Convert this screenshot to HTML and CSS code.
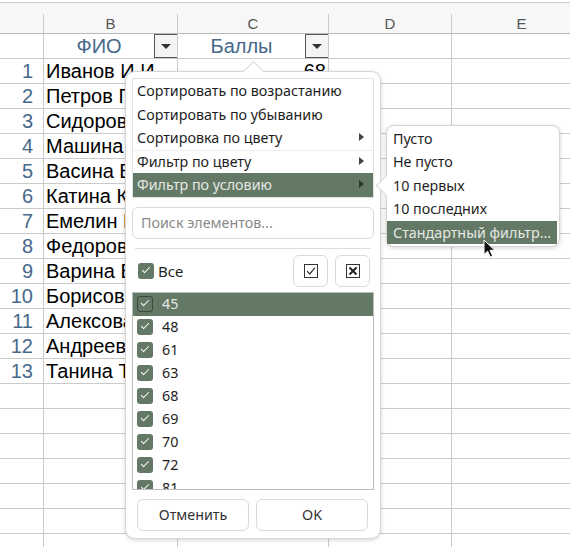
FILE: index.html
```html
<!DOCTYPE html>
<html lang="ru">
  <head>
    <meta charset="UTF-8" />
    <title>Автофильтр</title>
    <link rel="stylesheet" href="styles.css">
  </head>
  <body>
    <div class="screen">
      <div class="sheet">
        <div class="strip"></div>
        <div class="row colhead">
          <div class="c"></div><div class="c">B</div><div class="c">C</div><div class="c">D</div><div class="c">E</div>
        </div>
        <div class="row head">
          <div class="c"></div>
          <div class="c hcell"><span class="title">ФИО</span><span class="dd"></span></div>
          <div class="c hcell"><span class="title">Баллы</span><span class="dd"></span></div>
          <div class="c"></div><div class="c"></div>
        </div>
        <div class="row"><div class="c num">1</div><div class="c name">Иванов И.И.</div><div class="c val">68</div><div class="c"></div><div class="c"></div></div>
        <div class="row"><div class="c num">2</div><div class="c name">Петров П.П.</div><div class="c val"></div><div class="c"></div><div class="c"></div></div>
        <div class="row"><div class="c num">3</div><div class="c name">Сидоров С.С.</div><div class="c val"></div><div class="c"></div><div class="c"></div></div>
        <div class="row"><div class="c num">4</div><div class="c name">Машина М.М.</div><div class="c val"></div><div class="c"></div><div class="c"></div></div>
        <div class="row"><div class="c num">5</div><div class="c name">Васина В.В.</div><div class="c val"></div><div class="c"></div><div class="c"></div></div>
        <div class="row"><div class="c num">6</div><div class="c name">Катина К.К.</div><div class="c val"></div><div class="c"></div><div class="c"></div></div>
        <div class="row"><div class="c num">7</div><div class="c name">Емелин Е.Е.</div><div class="c val"></div><div class="c"></div><div class="c"></div></div>
        <div class="row"><div class="c num">8</div><div class="c name">Федоров Ф.Ф.</div><div class="c val"></div><div class="c"></div><div class="c"></div></div>
        <div class="row"><div class="c num">9</div><div class="c name">Варина В.В.</div><div class="c val"></div><div class="c"></div><div class="c"></div></div>
        <div class="row"><div class="c num">10</div><div class="c name">Борисов Б.Б.</div><div class="c val"></div><div class="c"></div><div class="c"></div></div>
        <div class="row"><div class="c num">11</div><div class="c name">Алексова А.А.</div><div class="c val"></div><div class="c"></div><div class="c"></div></div>
        <div class="row"><div class="c num">12</div><div class="c name">Андреев А.А.</div><div class="c val"></div><div class="c"></div><div class="c"></div></div>
        <div class="row"><div class="c num">13</div><div class="c name">Танина Т.Т.</div><div class="c val"></div><div class="c"></div><div class="c"></div></div>
        <div class="row"><div class="c"></div><div class="c"></div><div class="c"></div><div class="c"></div><div class="c"></div></div>
        <div class="row"><div class="c"></div><div class="c"></div><div class="c"></div><div class="c"></div><div class="c"></div></div>
        <div class="row"><div class="c"></div><div class="c"></div><div class="c"></div><div class="c"></div><div class="c"></div></div>
        <div class="row"><div class="c"></div><div class="c"></div><div class="c"></div><div class="c"></div><div class="c"></div></div>
        <div class="row"><div class="c"></div><div class="c"></div><div class="c"></div><div class="c"></div><div class="c"></div></div>
        <div class="row"><div class="c"></div><div class="c"></div><div class="c"></div><div class="c"></div><div class="c"></div></div>
        <div class="row"><div class="c"></div><div class="c"></div><div class="c"></div><div class="c"></div><div class="c"></div></div>
      </div>

      <!-- autofilter popup -->
      <div class="popup">
        <span class="notch notch-up"></span>
        <ul class="menu">
          <li>Сортировать по возрастанию</li>
          <li>Сортировать по убыванию</li>
          <li class="has-sub">Сортировка по цвету</li>
          <li class="has-sub sep">Фильтр по цвету</li>
          <li class="has-sub active">Фильтр по условию</li>
        </ul>
        <input class="search" type="text" placeholder="Поиск элементов..." />
        <div class="divider"></div>
        <div class="all-row">
          <span class="check-all"><span class="box"></span>Все</span>
          <button class="icon-btn" title="Выбрать все">
            <svg width="16" height="16" viewBox="0 0 16 16">
              <rect x="1.5" y="1.5" width="13" height="13" fill="none" stroke="#333" stroke-width="1"/>
              <path d="M4 8.2 L6.8 11 L12 4.6" fill="none" stroke="#333" stroke-width="1.2"/>
            </svg>
          </button>
          <button class="icon-btn" title="Снять все">
            <svg width="16" height="16" viewBox="0 0 16 16">
              <rect x="1.5" y="1.5" width="13" height="13" fill="none" stroke="#333" stroke-width="1"/>
              <path d="M4.5 4.5 L11.5 11.5 M11.5 4.5 L4.5 11.5" fill="none" stroke="#222" stroke-width="2"/>
            </svg>
          </button>
        </div>
        <ul class="values">
          <li class="active"><span class="box"></span>45</li>
          <li><span class="box"></span>48</li>
          <li><span class="box"></span>61</li>
          <li><span class="box"></span>63</li>
          <li><span class="box"></span>68</li>
          <li><span class="box"></span>69</li>
          <li><span class="box"></span>70</li>
          <li><span class="box"></span>72</li>
          <li><span class="box"></span>81</li>
        </ul>
        <div class="actions">
          <button class="btn">Отменить</button>
          <button class="btn">OK</button>
        </div>
      </div>

      <div class="submenu">
        <span class="notch notch-left"></span>
        <ul>
          <li>Пусто</li>
          <li>Не пусто</li>
          <li>10 первых</li>
          <li>10 последних</li>
          <li class="active">Стандартный фильтр...</li>
        </ul>
      </div>

      <svg class="cursor" width="14" height="20" viewBox="0 0 14 20">
        <path d="M1 1 L1 15.5 L4.6 12.2 L7.2 18 L9.6 17 L7 11.3 L11.8 11.3 Z" fill="#111" stroke="#fff" stroke-width="1" stroke-linejoin="round"/>
      </svg>
    </div>
  </body>
</html>
```

FILE: styles.css
```css
body {
  margin: 0;
  background-color: white;
  font-family: "Liberation Sans", Arial, sans-serif;
}
.screen {
  position: relative;
  width: 570px;
  height: 547px;
  overflow: hidden;
}
.strip {
  margin-top: 2px;
  height: 11px;
  border-top: 1px solid #cdcdcd;
  background-color: #f7f7f7;
}
.row {
  display: grid;
  grid-template-columns: 44px 134px 151px 123px 140px;
  height: 25px;
}
.c {
  box-sizing: border-box;
  border-right: 1px solid #cacaca;
  border-bottom: 1px solid #cacaca;
  font-size: 20px;
  line-height: 24px;
  white-space: nowrap;
  overflow: hidden;
}
.colhead {
  height: 20px;
  background-color: #f7f7f7;
}
.colhead .c {
  font-size: 15px;
  line-height: 19px;
  text-align: center;
  color: #555;
  border-bottom-color: #b9b9b9;
}
.hcell {
  display: flex;
  align-items: stretch;
}
.hcell .title {
  flex: 1;
  text-align: center;
  color: #46688a;
}
.dd {
  width: 23px;
  box-sizing: border-box;
  border: 1px solid #555;
  border-right: none;
  background-color: #f4f4f4;
  position: relative;
}
.dd::after {
  content: "";
  position: absolute;
  left: 6px;
  top: 9px;
  border-left: 5px solid transparent;
  border-right: 5px solid transparent;
  border-top: 5px solid #333;
}
.num {
  text-align: right;
  padding-right: 10px;
  color: #46688a;
}
.name {
  padding-left: 2px;
  color: #000;
}
.val {
  text-align: right;
  padding-right: 2px;
  color: #000;
}

/* popup */
.popup {
  position: absolute;
  left: 125px;
  top: 71px;
  width: 256px;
  box-sizing: border-box;
  padding: 6px 6px 7px;
  background-color: white;
  border: 1px solid #d6d6d6;
  border-radius: 10px;
  box-shadow: 0 1px 4px rgba(0, 0, 0, 0.18);
  font-family: "Noto Sans", sans-serif;
  font-size: 14.3px;
  color: #1e1e1e;
}
.notch {
  position: absolute;
  width: 14px;
  height: 14px;
  background-color: white;
  transform: rotate(45deg);
}
.notch-up {
  left: 120px;
  top: -8px;
  border-left: 1px solid #d6d6d6;
  border-top: 1px solid #d6d6d6;
}
.notch-left {
  left: -8px;
  top: 52px;
  border-left: 1px solid #d6d6d6;
  border-bottom: 1px solid #d6d6d6;
}
ul {
  list-style: none;
  margin: 0;
  padding: 0;
}
.menu {
  position: relative;
  border: 1px solid #e2e2e2;
}
.menu li {
  height: 23.6px;
  line-height: 23px;
  padding-left: 4px;
  position: relative;
}
.menu li.sep {
  box-shadow: inset 0 1px 0 #efefef;
}
.has-sub::after {
  content: "";
  position: absolute;
  right: 9px;
  top: 7px;
  border-top: 4.5px solid transparent;
  border-bottom: 4.5px solid transparent;
  border-left: 5px solid #444;
}
.menu li.active,
.values li.active,
.submenu li.active {
  background-color: #647866;
  color: #e4e8e4;
}
.menu li.active::after {
  border-left-color: #333;
}
.search {
  display: block;
  width: 100%;
  box-sizing: border-box;
  height: 32px;
  margin-top: 9px;
  padding: 0 8px;
  border: 1px solid #d9d9d9;
  border-radius: 6px;
  font-family: "Noto Sans", sans-serif;
  font-size: 14.3px;
  outline: none;
}
.search::placeholder {
  color: #8a8a8a;
}
.divider {
  margin: 9px 3px 0;
  border-top: 1px solid #dedede;
}
.all-row {
  display: flex;
  align-items: center;
  gap: 7px;
  margin-top: 6px;
  padding: 0 4px 0 6px;
  height: 32px;
}
.check-all {
  flex: 1;
  display: flex;
  align-items: center;
  gap: 4px;
  font-size: 15px;
}
.box {
  display: inline-block;
  position: relative;
  flex: none;
  width: 16px;
  height: 16px;
  box-sizing: border-box;
  border-radius: 3px;
  background-color: #647866;
}
.box::after {
  content: "";
  position: absolute;
  left: 4px;
  top: 4px;
  width: 7px;
  height: 3px;
  border-left: 1.6px solid white;
  border-bottom: 1.6px solid white;
  transform: rotate(-45deg);
}
.icon-btn {
  width: 35px;
  height: 32px;
  padding: 0;
  display: flex;
  align-items: center;
  justify-content: center;
  background-color: white;
  border: 1px solid #dadada;
  border-radius: 6px;
}
.values {
  margin-top: 5px;
  height: 198px;
  overflow: hidden;
  box-sizing: border-box;
  border: 1px solid #bdbdbd;
}
.values li {
  height: 23px;
  line-height: 20px;
  display: flex;
  align-items: center;
  gap: 9px;
  padding-left: 4px;
}
.values li.active .box {
  border: 1px solid #3c4a3e;
}
.values li.active .box::after {
  left: 3px;
  top: 3px;
}
.actions {
  display: flex;
  gap: 7px;
  margin-top: 9px;
  padding: 0 5px;
}
.btn {
  width: 112px;
  height: 32px;
  background-color: white;
  border: 1px solid #dadada;
  border-radius: 6px;
  font-family: "Noto Sans", sans-serif;
  font-size: 14.3px;
  color: #333;
}

/* submenu */
.submenu {
  position: absolute;
  left: 386px;
  top: 125px;
  width: 174px;
  box-sizing: border-box;
  padding: 1px 2px 2px 0;
  background-color: white;
  border: 1px solid #d6d6d6;
  border-radius: 8px;
  box-shadow: 0 1px 4px rgba(0, 0, 0, 0.18);
  font-family: "Noto Sans", sans-serif;
  font-size: 14.3px;
  color: #1e1e1e;
}
.submenu li {
  position: relative;
  height: 23.4px;
  line-height: 23px;
  padding-left: 6px;
  white-space: nowrap;
}
.cursor {
  position: absolute;
  left: 483px;
  top: 239px;
}
```
